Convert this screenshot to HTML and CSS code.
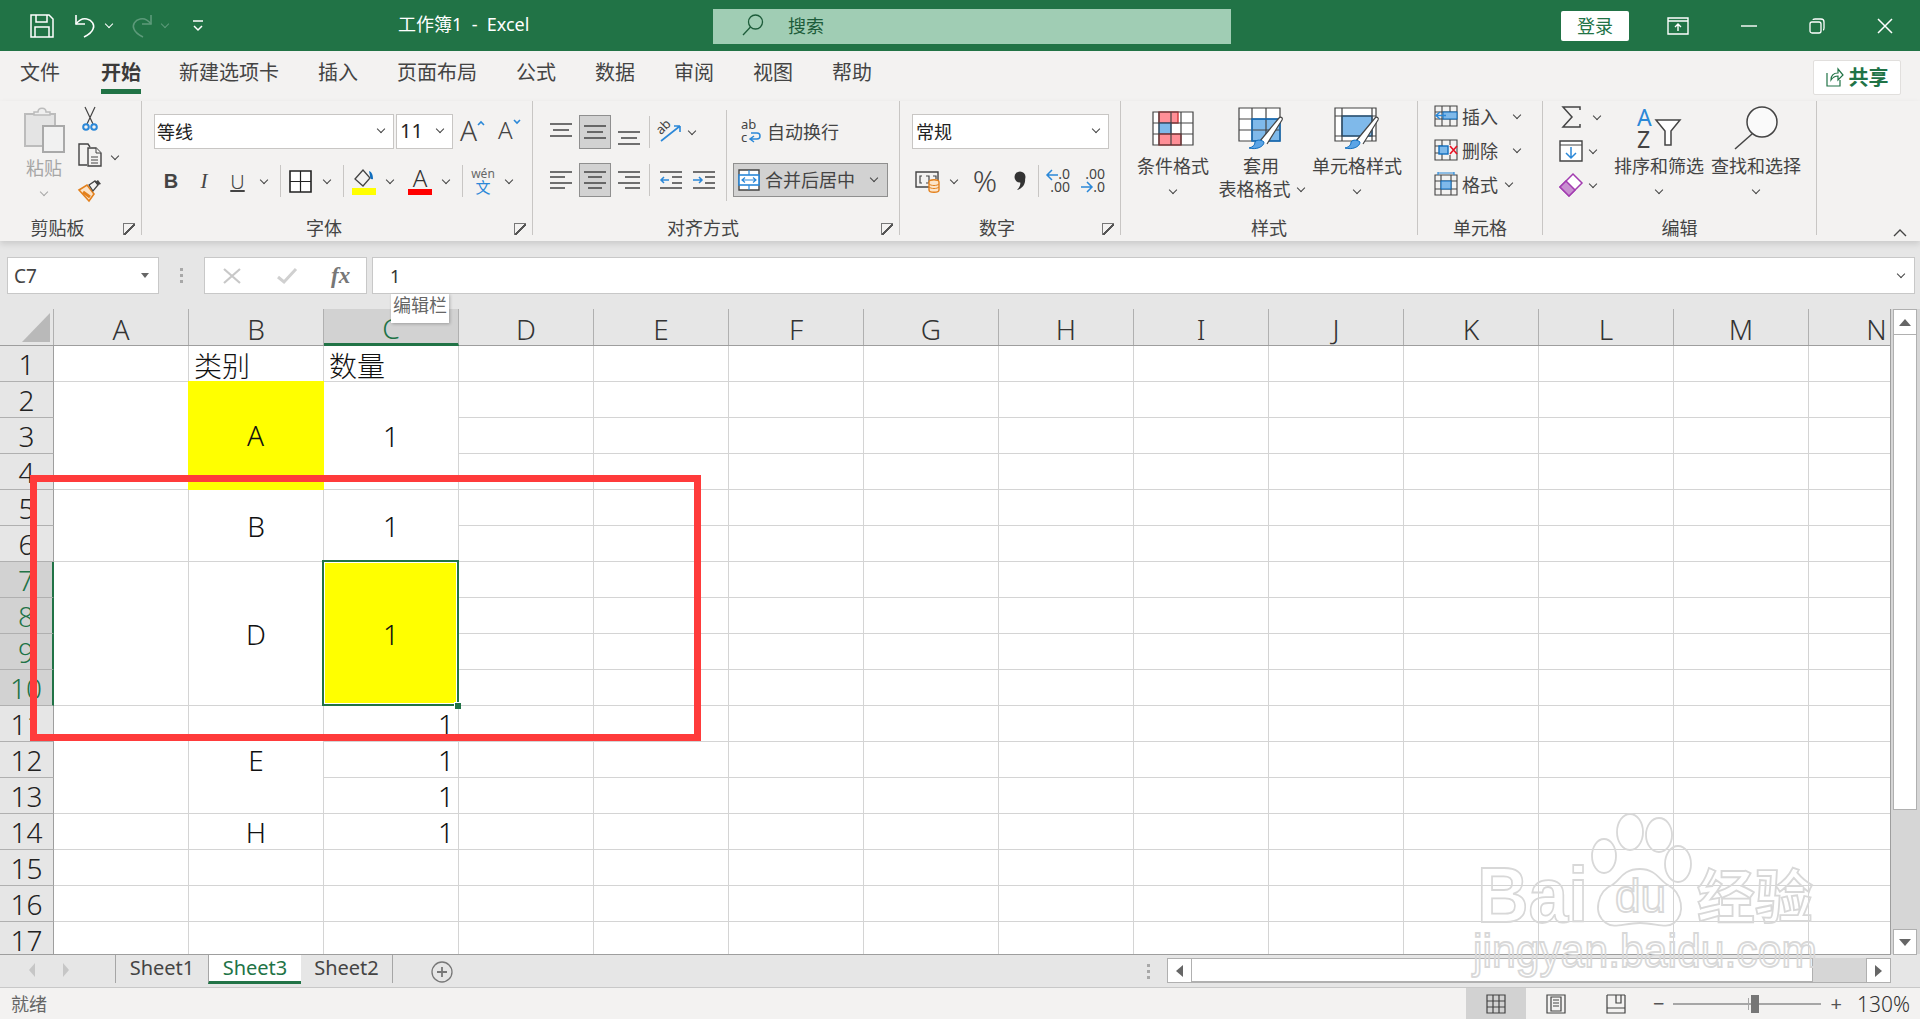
FILE: index.html
```html
<!DOCTYPE html>
<html>
  <head>
    <meta charset="utf-8">
    <meta name="viewport" content="width=device-width">
    <title>工作簿1 - Excel</title>
    <link rel="stylesheet" href="styles.css">
  </head>
  <body>
    <!-- title bar -->
    <header class="titlebar">
      <div class="qat">
        <svg class="qat-save" width="24" height="24" viewBox="0 0 24 24" fill="none" stroke="#fff" stroke-width="1.5"><path d="M1 1h18l4 4v18H1z"/><path d="M6 1v7h11V1M5 23V13h14v10"/></svg>
        <svg class="qat-undo" width="22" height="24" viewBox="0 0 22 24" fill="none" stroke="#fff" stroke-width="1.6"><path d="M2 1v9h9"/><path d="M2 10c3-4 7-6 11-5 5 1 8 6 6 10-1 3-5 6-9 8"/></svg>
        <span class="chev chev-white"></span>
        <svg class="qat-redo" width="22" height="24" viewBox="0 0 22 24" fill="none" stroke="#5d9a7a" stroke-width="1.6"><path d="M20 1v9h-9"/><path d="M20 10c-3-4-7-6-11-5-5 1-8 6-6 10 1 3 5 6 9 8"/></svg>
        <span class="chev chev-dim"></span>
        <svg class="qat-more" width="10" height="12" viewBox="0 0 10 12" fill="none" stroke="#fff" stroke-width="1.5"><path d="M0 1h10M1 6l4 4 4-4"/></svg>
      </div>
      <div class="doc-title">工作簿1&nbsp; - &nbsp;Excel</div>
      <div class="search">
        <svg width="22" height="22" viewBox="0 0 22 22" fill="none" stroke="#1d5c3a" stroke-width="1.3"><circle cx="13.5" cy="8" r="7"/><path d="M8.5 13L1 21"/></svg>
        <span>搜索</span>
      </div>
      <div class="login">登录</div>
      <div class="winbtns">
        <svg width="22" height="18" viewBox="0 0 22 18" fill="none" stroke="#fff" stroke-width="1.4"><path d="M1 1h20v16H1zM1 4h20M11 14V7M8 10l3-3 3 3"/></svg>
        <svg width="16" height="16" viewBox="0 0 16 16" stroke="#fff" stroke-width="1.4"><path d="M0 8h16"/></svg>
        <svg width="16" height="16" viewBox="0 0 16 16" fill="none" stroke="#fff" stroke-width="1.3"><rect x="1" y="4" width="11" height="11" rx="2"/><path d="M4 2c0-1 1-1 2-1h6c2 0 3 1 3 3v6c0 1 0 2-1 2"/></svg>
        <svg width="16" height="16" viewBox="0 0 16 16" stroke="#fff" stroke-width="1.5"><path d="M1 1l14 14M15 1L1 15"/></svg>
      </div>
    </header>

    <!-- tabs -->
    <nav class="tabs">
      <span>文件</span>
      <span class="tab-active">开始</span>
      <span>新建选项卡</span>
      <span>插入</span>
      <span>页面布局</span>
      <span>公式</span>
      <span>数据</span>
      <span>审阅</span>
      <span>视图</span>
      <span>帮助</span>
      <div class="share">
        <svg width="18" height="20" viewBox="0 0 18 20" fill="none" stroke="#217346" stroke-width="1.2"><path d="M1 6v13h13v-6"/><path d="M5 13c0-5 3-7 7-7V2l5 6-5 5V9c-3 0-5 1-7 4z"/></svg>
        <b>共享</b>
      </div>
    </nav>

    <!-- ribbon -->
    <section class="ribbon">
      <div class="group group-clip">
        <div class="clip-body">
          <div class="paste">
            <svg width="42" height="46" viewBox="0 0 42 46"><path d="M2 7h30v32H2z" fill="#e4e4e4" stroke="#bcbcbc" stroke-width="2"/><path d="M11 8V5h4c0-5 8-5 8 0h4v3z" fill="#efefef" stroke="#bcbcbc" stroke-width="1.5"/><rect x="20" y="19" width="21" height="26" fill="#f1f1f1" stroke="#a9a9a9" stroke-width="2"/></svg>
            <span>粘贴</span>
            <span class="chev chev-gray"></span>
          </div>
          <div class="clip-tools">
            <div class="clip-row"><svg width="16" height="24" viewBox="0 0 16 24" fill="none"><path d="M3 0l8 17M13 0L5 17" stroke="#444" stroke-width="1.2"/><circle cx="4" cy="20" r="2.8" stroke="#2b88d8" stroke-width="2"/><circle cx="12" cy="20" r="2.8" stroke="#2b88d8" stroke-width="2"/></svg></div>
            <div class="clip-row">
              <svg width="24" height="24" viewBox="0 0 24 24" fill="#f3f2f1" stroke="#444" stroke-width="1.4"><path d="M9 22H1V1h9l2 3"/><path d="M10 5h8l5 5v13H10z"/><path d="M18 5v5h5M13 14h7M13 17h7M13 20h7" stroke-width="1"/></svg>
              <span class="chev"></span>
            </div>
            <div class="clip-row"><svg width="24" height="22" viewBox="0 0 24 22"><path d="M1 11l8-5 7 9-5 7z" fill="#fbe3c8" stroke="#e3801c" stroke-width="1.6"/><path d="M5 13l7 5" stroke="#e3801c" stroke-width="3"/><path d="M11 6l6-4 3 4-5 6z" fill="#f3f2f1" stroke="#444" stroke-width="1.3"/><path d="M17 3l3-2 3 4-3 1" fill="#444"/></svg></div>
          </div>
        </div>
        <div class="group-foot"><span class="group-label">剪贴板</span><span class="launcher"></span></div>
      </div>

      <div class="group group-font">
        <div class="font-row1">
          <div class="select select-font"><span>等线</span><i class="chev"></i></div>
          <div class="select select-size"><span>11</span><i class="chev"></i></div>
          <div class="grow-a"><span>A</span><svg width="8" height="5" viewBox="0 0 8 5" fill="none" stroke="#2b88d8" stroke-width="1.6"><path d="M1 5l3-3 3 3"/></svg></div>
          <div class="shrink-a"><span>A</span><svg width="8" height="5" viewBox="0 0 8 5" fill="none" stroke="#2b88d8" stroke-width="1.6"><path d="M1 0l3 3 3-3"/></svg></div>
        </div>
        <div class="font-row2">
          <b class="fmt-b">B</b>
          <i class="fmt-i">I</i>
          <u class="fmt-u">U</u>
          <span class="chev"></span>
          <span class="vsep"></span>
          <svg width="23" height="23" viewBox="0 0 23 23" fill="#fff" stroke="#222" stroke-width="1.6"><path d="M1 1h21v21H1z"/><path d="M11.5 1v21M1 11.5h21" stroke-width="1.2"/></svg>
          <span class="chev"></span>
          <span class="vsep"></span>
          <svg width="24" height="27" viewBox="0 0 24 27"><path d="M3 11L11 2l7 8-7 8z" fill="#f3f2f1" stroke="#444" stroke-width="1.3"/><path d="M17 3c3 1 4 4 4 8-2 1-3-1-3-3z" fill="#106ebe"/><rect y="20" width="24" height="7" fill="#ff0"/></svg>
          <span class="chev"></span>
          <div class="color-a"><span>A</span></div>
          <span class="chev"></span>
          <span class="vsep"></span>
          <div class="wen"><small>wén</small><span>文</span></div>
          <span class="chev"></span>
        </div>
        <div class="group-foot"><span class="group-label">字体</span><span class="launcher"></span></div>
      </div>

      <div class="group group-align">
        <div class="align-body">
          <div class="align-left">
            <div class="align-row align-row-top">
              <svg width="22" height="18" viewBox="0 0 22 18" stroke="#444" stroke-width="1.6"><path d="M0 1h22M3 7h16M0 13h22"/></svg>
              <div class="on"><svg width="22" height="18" viewBox="0 0 22 18" stroke="#444" stroke-width="1.6"><path d="M0 3h22M3 9h16M0 15h22"/></svg></div>
              <svg class="lower" width="22" height="18" viewBox="0 0 22 18" stroke="#444" stroke-width="1.6"><path d="M0 5h22M3 11h16M0 17h22"/></svg>
              <span class="vsep"></span>
              <svg width="26" height="26" viewBox="0 0 26 26" fill="none"><path d="M4 22L23 7M23 7h-6M23 7v6" stroke="#2b88d8" stroke-width="1.6"/><text x="0" y="13" font-size="13" fill="#444" transform="rotate(-45 6 10)">ab</text></svg>
              <span class="chev"></span>
            </div>
            <div class="align-row">
              <svg width="22" height="20" viewBox="0 0 22 20" stroke="#444" stroke-width="1.6"><path d="M0 2h22M0 7h15M0 13h22M0 18h15"/></svg>
              <div class="on"><svg width="22" height="20" viewBox="0 0 22 20" stroke="#444" stroke-width="1.6"><path d="M0 2h22M4 7h14M0 13h22M4 18h14"/></svg></div>
              <svg width="22" height="20" viewBox="0 0 22 20" stroke="#444" stroke-width="1.6"><path d="M0 2h22M7 7h15M0 13h22M7 18h15"/></svg>
              <span class="vsep"></span>
              <svg width="22" height="20" viewBox="0 0 22 20" fill="none"><path d="M0 2h22M12 7h10M12 13h10M0 18h22" stroke="#444" stroke-width="1.5"/><path d="M9 10H1M4 7l-3 3 3 3" stroke="#2b88d8" stroke-width="1.5"/></svg>
              <svg width="22" height="20" viewBox="0 0 22 20" fill="none"><path d="M0 2h22M12 7h10M12 13h10M0 18h22" stroke="#444" stroke-width="1.5"/><path d="M0 10h9M6 7l3 3-3 3" stroke="#2b88d8" stroke-width="1.5"/></svg>
              <span></span>
            </div>
          </div>
          <div class="align-right">
            <div class="wrap-text">
              <svg width="21" height="24" viewBox="0 0 21 24" fill="none"><text x="0" y="10" font-size="13" fill="#444">ab</text><text x="0" y="23" font-size="13" fill="#444">c</text><path d="M10 20h6c4 0 4-6 0-6h-6M13 17l-4 3 4 3" stroke="#2b88d8" stroke-width="1.5"/></svg>
              <span>自动换行</span>
            </div>
            <div class="merge">
              <svg width="22" height="22" viewBox="0 0 22 22" fill="#fff"><path d="M1 1h20v20H1z" stroke="#444" stroke-width="1.4"/><rect x="1" y="6" width="20" height="10" stroke="#2b88d8" stroke-width="1.6"/><path d="M4 11h14M7 8.500l-3 2.500 3 2.500M15 8.500l3 2.500-3 2.500M11 1v5M11 16v5" stroke="#2b88d8" stroke-width="1.2" fill="none"/></svg>
              <span>合并后居中</span>
              <i class="chev"></i>
            </div>
          </div>
        </div>
        <div class="group-foot"><span class="group-label">对齐方式</span><span class="launcher"></span></div>
      </div>

      <div class="group group-num">
        <div class="select select-num"><span>常规</span><i class="chev"></i></div>
        <div class="num-row">
          <svg width="26" height="24" viewBox="0 0 26 24" fill="none"><path d="M1 3h22v15H1z" stroke="#444" stroke-width="1.4"/><path d="M7 7H5v7h2M11 7h3v7h-3M18 7h3v3" stroke="#444" stroke-width="1.2"/><path d="M14 13c0-3 10-3 10 0v8c0 3-10 3-10 0z" fill="#fce4c8" stroke="#e3801c" stroke-width="1.4"/><path d="M14 15c2 2 8 2 10 0M14 18c2 2 8 2 10 0" stroke="#e3801c"/></svg>
          <span class="chev"></span>
          <span class="pct">%</span>
          <svg width="13" height="20" viewBox="0 0 13 20" fill="#333"><circle cx="7" cy="6" r="5.500"/><path d="M12 7c1 6-3 11-8 12 3-3 4-6 3-9z"/></svg>
          <span class="vsep"></span>
          <div class="dec"><svg width="12" height="12" viewBox="0 0 12 12" fill="none" stroke="#2b88d8" stroke-width="1.5"><path d="M12 6H1M6 1L1 6l5 5"/></svg><span>.0</span><span class="dec-low">.00</span></div>
          <div class="dec"><span class="dec-top">.00</span><svg width="12" height="12" viewBox="0 0 12 12" fill="none" stroke="#2b88d8" stroke-width="1.5"><path d="M0 6h11M6 1l5 5-5 5"/></svg><span class="dec-low2">.0</span></div>
        </div>
        <div class="group-foot"><span class="group-label">数字</span><span class="launcher"></span></div>
      </div>

      <div class="group group-styles">
        <div class="big-row">
          <div class="big big-88">
            <div class="big-icon"><svg width="42" height="35" viewBox="0 0 42 35" fill="none"><path d="M1 1h40v33H1z" fill="#fff"/><rect x="7" y="1" width="19" height="11" fill="#ff8f97" stroke="#d13438" stroke-width="1.4"/><rect x="7" y="12" width="12" height="11" fill="#7fb9ea" stroke="#106ebe" stroke-width="1"/><rect x="7" y="23" width="22" height="11" fill="#ff8f97" stroke="#d13438" stroke-width="1.4"/><path d="M1 1h40v33H1zM1 12h40M1 23h40M7 1v33M19 1v33M29 1v33" stroke="#444" stroke-width="1.2"/></svg></div>
            <span>条件格式</span>
            <i class="chev big-chev"></i>
          </div>
          <div class="big big-88">
            <div class="big-icon"><svg width="46" height="42" viewBox="0 0 46 42" fill="none"><path d="M1 1h41v33H1z" fill="#fff"/><rect x="14" y="12" width="28" height="22" fill="#7fb9ea"/><path d="M1 1h41v33H1zM1 12h41M1 23h41M14 1v33M28 1v33" stroke="#444" stroke-width="1.2"/><path d="M14 12h28v22H14z" stroke="#106ebe" stroke-width="1.4"/><path d="M22 34L41 11c2-2 4 0 3 2L29 37" fill="#fff" stroke="#444" stroke-width="1.2"/><path d="M11 41c4-1 6-3 6-6 2-3 7-2 9 0 0 5-8 8-15 6z" fill="#5ba4e6" stroke="#106ebe"/></svg></div>
            <span>套用</span>
            <span class="big-line2">表格格式<i class="chev"></i></span>
          </div>
          <div class="big big-104">
            <div class="big-icon"><svg width="46" height="42" viewBox="0 0 46 42" fill="none"><path d="M1 1h41v33H1z" fill="#fff"/><rect x="8" y="9" width="30" height="20" fill="#7fb9ea" stroke="#106ebe" stroke-width="1.4"/><path d="M1 1h41v33H1zM1 9h41M1 29h41M8 1v33M38 1v33" stroke="#444" stroke-width="1.2"/><path d="M22 34L41 11c2-2 4 0 3 2L29 37" fill="#fff" stroke="#444" stroke-width="1.2"/><path d="M11 41c4-1 6-3 6-6 2-3 7-2 9 0 0 5-8 8-15 6z" fill="#5ba4e6" stroke="#106ebe"/></svg></div>
            <span>单元格样式</span>
            <i class="chev big-chev"></i>
          </div>
        </div>
        <div class="group-foot"><span class="group-label">样式</span></div>
      </div>

      <div class="group group-cells">
        <div class="cells-list">
          <div class="cells-row">
            <svg width="24" height="22" viewBox="0 0 24 22" fill="none"><path d="M1 1h22v20H1zM1 7h22M1 14h22M8 1v20M16 1v20" stroke="#444" stroke-width="1.1"/><rect x="9" y="7" width="14" height="7" fill="#7fb9ea" stroke="#106ebe"/><path d="M12 10.500H2M6 7l-4 3.500L6 14" stroke="#2b88d8" stroke-width="1.5"/></svg>
            <span>插入</span><i class="chev"></i>
          </div>
          <div class="cells-row">
            <svg width="24" height="22" viewBox="0 0 24 22" fill="none"><path d="M1 1h22v20H1zM1 7h8M1 14h8M16 1v5M16 16v5M8 1v6M8 15v6" stroke="#444" stroke-width="1.1"/><rect x="5" y="7" width="9" height="8" fill="#7fb9ea" stroke="#106ebe" stroke-width="1.4"/><path d="M16 7l7 8M23 7l-7 8" stroke="#e81123" stroke-width="1.6"/></svg>
            <span>删除</span><i class="chev"></i>
          </div>
          <div class="cells-row">
            <svg width="24" height="24" viewBox="0 0 24 24" fill="none"><path d="M1 3h22v20H1zM1 9h22M1 17h22M7 3v20M17 3v20" stroke="#444" stroke-width="1.1"/><rect x="7" y="9" width="10" height="8" fill="#7fb9ea" stroke="#106ebe"/><path d="M4 1h16M4 0v3M20 0v3" stroke="#2b88d8" stroke-width="1.2"/></svg>
            <span>格式</span><i class="chev chev-near"></i>
          </div>
        </div>
        <div class="group-foot"><span class="group-label">单元格</span></div>
      </div>

      <div class="group group-edit">
        <div class="edit-body">
          <div class="edit-list">
            <div class="edit-row"><svg class="sum" width="18" height="22" viewBox="0 0 18 22" fill="none" stroke="#444" stroke-width="1.5"><path d="M18 4V1H1l9 10-9 10h17v-3"/></svg><i class="chev"></i></div>
            <div class="edit-row"><svg width="24" height="22" viewBox="0 0 24 22" fill="#fff"><path d="M1 1h22v20H1z" stroke="#444" stroke-width="1.4"/><path d="M1 5h22" stroke="#444"/><path d="M12 7v11M7 13l5 5 5-5" fill="none" stroke="#2b88d8" stroke-width="1.5"/></svg><i class="chev"></i></div>
            <div class="edit-row"><svg width="24" height="24" viewBox="0 0 24 24"><path d="M1 14L14 1l9 9-13 13z" fill="#fff" stroke="#a23cb0" stroke-width="1.5"/><path d="M1 14l6-6 9 9-6 6z" fill="#c88fd0" stroke="#a23cb0" stroke-width="1.5"/></svg><i class="chev"></i></div>
          </div>
          <div class="big big-90">
            <div class="big-icon"><svg width="44" height="42" viewBox="0 0 44 42" fill="none"><text x="0" y="19" font-size="23" fill="#2b88d8">A</text><text x="0" y="41" font-size="23" fill="#444">Z</text><path d="M19 13h24l-9 11v14h-6V24z" stroke="#444" stroke-width="1.5" fill="#fff"/></svg></div>
            <span>排序和筛选</span>
            <i class="chev big-chev"></i>
          </div>
          <div class="big big-90">
            <div class="big-icon"><svg width="44" height="44" viewBox="0 0 44 44" fill="none" stroke="#444" stroke-width="1.5"><circle cx="28" cy="16" r="15" fill="#fafafa"/><path d="M18 28L1 43"/></svg></div>
            <span>查找和选择</span>
            <i class="chev big-chev"></i>
          </div>
        </div>
        <div class="group-foot"><span class="group-label">编辑</span></div>
      </div>

      <div class="ribbon-end">
        <svg width="14" height="8" viewBox="0 0 14 8" fill="none" stroke="#444" stroke-width="1.4"><path d="M1 8l6-6 6 6"/></svg>
      </div>
    </section>

    <!-- formula bar -->
    <section class="formula">
      <div class="namebox"><span>C7</span><i class="caret"></i></div>
      <div class="fdots"><i></i><i></i><i></i></div>
      <div class="fbtns">
        <svg width="18" height="16" viewBox="0 0 18 16" stroke="#c8c8c8" stroke-width="2.200"><path d="M1 1l16 14M17 1L1 15"/></svg>
        <svg width="20" height="16" viewBox="0 0 20 16" fill="none" stroke="#d0d0d0" stroke-width="3"><path d="M1 9l6 5L19 1"/></svg>
        <span class="fx">fx</span>
      </div>
      <div class="finput"><span>1</span><i class="chev"></i></div>
    </section>

    <!-- sheet -->
    <section class="sheet-wrap">
      <div class="sheet">
        <div class="col-heads">
          <div class="corner"><svg width="28" height="29" viewBox="0 0 28 29"><path d="M28 0v29H0z" fill="#b9b9b9"/></svg></div>
          <div class="col-head">A</div>
          <div class="col-head">B</div>
          <div class="col-head col-on">C</div>
          <div class="col-head">D</div>
          <div class="col-head">E</div>
          <div class="col-head">F</div>
          <div class="col-head">G</div>
          <div class="col-head">H</div>
          <div class="col-head">I</div>
          <div class="col-head">J</div>
          <div class="col-head">K</div>
          <div class="col-head">L</div>
          <div class="col-head">M</div>
          <div class="col-head col-last">N</div>
        </div>
        <div class="sheet-body">
          <div class="row-heads">
            <div class="row-head">1</div>
            <div class="row-head">2</div>
            <div class="row-head">3</div>
            <div class="row-head">4</div>
            <div class="row-head">5</div>
            <div class="row-head">6</div>
            <div class="row-head row-on">7</div>
            <div class="row-head row-on">8</div>
            <div class="row-head row-on">9</div>
            <div class="row-head row-on">10</div>
            <div class="row-head">11</div>
            <div class="row-head">12</div>
            <div class="row-head">13</div>
            <div class="row-head">14</div>
            <div class="row-head">15</div>
            <div class="row-head">16</div>
            <div class="row-head">17</div>
          </div>
          <div class="cells">
            <div class="cell txt b1">类别</div>
            <div class="cell txt c1">数量</div>
            <div class="cell merged a2"></div>
            <div class="cell merged yellow b2">A</div>
            <div class="cell merged c2">1</div>
            <div class="cell merged a5"></div>
            <div class="cell merged b5">B</div>
            <div class="cell merged c5">1</div>
            <div class="cell merged a7"></div>
            <div class="cell merged b7">D</div>
            <div class="cell merged yellow selected c7">1<span class="fill-handle"></span></div>
            <div class="cell merged a11"></div>
            <div class="cell merged b11">E</div>
            <div class="cell num c11">1</div>
            <div class="cell num c12">1</div>
            <div class="cell num c13">1</div>
            <div class="cell merged b14">H</div>
            <div class="cell num c14">1</div>
          </div>
        </div>
      </div>
      <div class="vscroll">
        <div class="sbtn"><svg width="12" height="7" viewBox="0 0 12 7"><path d="M0 7l6-7 6 7z" fill="#666"/></svg></div>
        <div class="vthumb"></div>
        <div class="sbtn"><svg width="12" height="7" viewBox="0 0 12 7"><path d="M0 0l6 7 6-7z" fill="#666"/></svg></div>
      </div>
    </section>

    <!-- sheet tabs -->
    <section class="tabbar">
      <div class="tab-nav">
        <svg width="6" height="14" viewBox="0 0 6 14"><path d="M6 0L0 7l6 7z" fill="#c6c6c6"/></svg>
        <svg width="6" height="14" viewBox="0 0 6 14"><path d="M0 0l6 7-6 7z" fill="#c6c6c6"/></svg>
      </div>
      <div class="sheet-tab">Sheet1</div>
      <div class="sheet-tab sheet-tab-on">Sheet3</div>
      <div class="sheet-tab sheet-tab-last">Sheet2</div>
      <div class="add-sheet">
        <svg width="22" height="22" viewBox="0 0 22 22" fill="none" stroke="#777" stroke-width="1.300"><circle cx="11" cy="11" r="10"/><path d="M11 6v10M6 11h10" stroke-width="1.800"/></svg>
      </div>
      <div class="fdots tab-dots"><i></i><i></i><i></i></div>
      <div class="hscroll">
        <div class="sbtn hbtn"><svg width="7" height="12" viewBox="0 0 7 12"><path d="M7 0L0 6l7 6z" fill="#666"/></svg></div>
        <div class="hthumb"></div>
        <div class="htrack"></div>
        <div class="sbtn hbtn"><svg width="7" height="12" viewBox="0 0 7 12"><path d="M0 0l7 6-7 6z" fill="#666"/></svg></div>
      </div>
    </section>

    <!-- status bar -->
    <footer class="status">
      <span class="status-text">就绪</span>
      <div class="views">
        <div class="view view-on"><svg width="20" height="20" viewBox="0 0 20 20" fill="none" stroke="#444" stroke-width="1.200"><path d="M1 1h18v18H1zM1 7h18M1 13h18M7 1v18M13 1v18"/></svg></div>
        <div class="view"><svg width="20" height="20" viewBox="0 0 20 20" fill="none" stroke="#444" stroke-width="1.200"><path d="M1 1h18v18H1zM5 3h10v14H5zM7 6h6M7 9h6M7 12h6"/></svg></div>
        <div class="view"><svg width="20" height="20" viewBox="0 0 20 20" fill="none" stroke="#444" stroke-width="1.200"><path d="M1 1v18h18V1M1 1h18M10 1v8h5V1M1 14h18"/></svg></div>
      </div>
      <div class="zoom">
        <span class="zoom-sign">−</span>
        <div class="slider"><i class="slider-tick"></i><i class="slider-thumb"></i></div>
        <span class="zoom-sign">+</span>
      </div>
      <span class="zoom-pct">130%</span>
    </footer>

    <!-- things lying over the window -->
    <div class="tooltip">编辑栏</div>
    <div class="redbox"></div>
    <svg class="watermark" width="360" height="180" viewBox="0 0 360 180" fill="none" stroke="#d8d8d8" stroke-width="1.800">
      <text x="7" y="112" font-family="Liberation Sans" font-weight="700" font-size="78" textLength="111" lengthAdjust="spacingAndGlyphs">Bai</text>
      <ellipse cx="160" cy="22" rx="13" ry="18"/>
      <ellipse cx="189" cy="25" rx="13" ry="17"/>
      <ellipse cx="134" cy="46" rx="12" ry="17"/>
      <ellipse cx="208" cy="54" rx="13" ry="18"/>
      <path d="M136 113c-14-10-8-32 6-38 8-4 10-16 28-16 16 0 20 12 28 16 14 8 18 28 6 38-8 6-18 0-34 0s-26 6-34 0z"/>
      <text x="145" y="102" font-family="Liberation Sans" font-size="46">du</text>
      <text x="227" y="108" font-family="Noto Sans CJK SC" font-weight="700" font-size="58">经验</text>
      <text x="3" y="157" font-family="Liberation Sans" font-size="46" textLength="344" lengthAdjust="spacingAndGlyphs">jingyan.baidu.com</text>
    </svg>
  </body>
</html>
```

FILE: styles.css
```css
* {
  margin: 0;
  box-sizing: border-box;
}
html, body {
  height: 100%;
}
body {
  position: relative;
  display: flex;
  flex-direction: column;
  overflow: hidden;
  color: #444;
  background: #e6e6e6;
  font-family: "Noto Sans", "Noto Sans CJK SC", sans-serif;
  font-size: 18px;
}
i {
  font-style: normal;
}
svg {
  flex-shrink: 0;
  display: block;
  overflow: visible;
}

.chev {
  display: block;
  width: 6px;
  height: 6px;
  margin-top: -3px;
  border-right: 1.5px solid #444;
  border-bottom: 1.5px solid #444;
  transform: rotate(45deg);
}
.chev-white { border-color: #fff; }
.chev-dim { border-color: #5d9a7a; }
.chev-gray { border-color: #a6a6a6; }

/* title bar */
.titlebar {
  height: 51px;
  flex-shrink: 0;
  display: flex;
  align-items: center;
  padding-left: 30px;
  background: #217346;
  color: #fff;
}
.qat {
  width: 368px;
  display: flex;
  align-items: center;
}
.qat-undo { margin-left: 20px; }
.qat .chev-white { margin-left: 10px; }
.qat-redo { margin-left: 19px; }
.qat .chev-dim { margin-left: 9px; }
.qat-more { margin-left: 25px; }
.doc-title {
  width: 315px;
  font-size: 18px;
  margin-top: -6px;
}
.search {
  width: 518px;
  height: 35px;
  margin-top: 1px;
  padding-bottom: 2px;
  display: flex;
  align-items: center;
  gap: 24px;
  padding-left: 29px;
  background: #a0cdb4;
  color: #1d5c3a;
}
.login {
  width: 68px;
  height: 30px;
  margin-left: 330px;
  border-radius: 2px;
  background: #fff;
  color: #217346;
  text-align: center;
  line-height: 30px;
}
.winbtns {
  flex: 1;
  display: flex;
  align-items: center;
  padding-left: 38px;
  gap: 52px;
}

/* tabs */
.tabs {
  height: 50px;
  flex-shrink: 0;
  display: flex;
  align-items: center;
  gap: 39px;
  padding: 0 19px 0 20px;
  background: #f3f2f1;
  font-size: 20px;
}
.tabs > span {
  line-height: 38px;
  margin-top: -7px;
}
.tabs > .tab-active {
  font-weight: 700;
  color: #3b3a39;
  line-height: 33px;
  border-bottom: 5px solid #217346;
  margin: -3px -1px 0 2px;
}
.share {
  width: 88px;
  height: 35px;
  margin-left: auto;
  margin-top: 3px;
  padding-bottom: 2px;
  display: flex;
  align-items: center;
  justify-content: center;
  gap: 5px;
  background: #fff;
  border: 1px solid #e1dfdd;
  border-radius: 2px;
  color: #217346;
}

/* ribbon */
.ribbon {
  height: 140px;
  flex-shrink: 0;
  display: flex;
  background: #f3f2f1;
  box-shadow: 0 3px 6px rgba(0, 0, 0, 0.12);
  position: relative;
}
.group {
  height: 134px;
  display: flex;
  flex-direction: column;
  border-right: 1px solid #c8c6c4;
}
.group-foot {
  margin-top: auto;
  margin-bottom: -3px;
  display: flex;
  align-items: center;
  height: 20px;
}
.group-label {
  flex: 1;
  text-align: center;
  line-height: 18px;
}
.launcher {
  width: 12px;
  height: 12px;
  margin: 2px 6px 0 8px;
  border-left: 1px solid #777;
  border-top: 1px solid #777;
  background: linear-gradient(135deg, transparent 44%, #555 44%, #555 56%, transparent 56%);
}
.vsep {
  display: block;
  width: 1px;
  height: 32px;
  background: #c8c6c4;
}

.group-clip { width: 142px; }
.group-font { width: 391px; }
.group-align { width: 367px; }
.group-num { width: 221px; }
.group-styles { width: 297px; }
.group-cells { width: 125px; }
.group-edit { width: 274px; }

/* clipboard */
.clip-body {
  display: flex;
  padding: 6px 0 0 21px;
}
.paste {
  width: 46px;
  display: flex;
  flex-direction: column;
  align-items: center;
  color: #a6a6a6;
}
.paste span {
  margin-top: 4px;
  line-height: 22px;
}
.paste .chev {
  margin-top: 10px;
}
.clip-tools {
  margin-left: 11px;
}
.clip-row {
  height: 36px;
  display: flex;
  gap: 10px;
  padding-left: 4px;
}
.clip-row + .clip-row { padding-left: 0; }
.clip-row .chev { margin-top: 10px; }

/* inputs */
.select {
  height: 35px;
  display: flex;
  align-items: center;
  justify-content: space-between;
  background: #fff;
  border: 1px solid #c8c6c4;
  color: #222;
  padding: 0 9px 2px 2px;
}
.select-font { width: 240px; }
.select-size { width: 57px; margin-left: 2px; padding-left: 3px; font-size: 20px; }
.select-num { width: 197px; margin: 13px 0 0 12px; padding-left: 3px; }

/* font */
.group-font {
  padding-top: 13px;
}
.font-row1 {
  display: flex;
  padding-left: 12px;
}
.grow-a, .shrink-a {
  display: flex;
  line-height: 32px;
  font-weight: 300;
}
.grow-a {
  margin-left: 7px;
  font-size: 28px;
}
.shrink-a {
  margin-left: 13px;
  font-size: 24px;
}
.grow-a svg, .shrink-a svg {
  margin-top: 6px;
}
.font-row2 {
  margin-top: 16px;
  height: 30px;
  margin-left: 12px;
  display: grid;
  grid-template-columns: 34px 32px 35px 18px 14px 26px 28px 4px 38px 14px 46px 6px 26px 16px 36px;
  justify-items: center;
  align-items: center;
}
.fmt-b {
  font-family: "Liberation Sans", sans-serif;
  font-size: 20px;
  color: #444;
}
.fmt-i {
  font-family: "Liberation Serif", serif;
  font-style: italic;
  font-size: 21px;
}
.fmt-u {
  font-size: 20px;
  font-weight: 300;
}
.color-a {
  width: 24px;
  height: 27px;
  text-align: center;
  line-height: 20px;
  font-size: 24px;
  font-weight: 300;
  border-bottom: 6px solid #f00;
  color: #333;
}
.wen {
  display: flex;
  flex-direction: column;
  align-items: center;
  color: #2b88d8;
  font-size: 15px;
  line-height: 15px;
}
.wen small {
  font-size: 12px;
  line-height: 13px;
  color: #666;
}

/* alignment */
.align-body {
  display: flex;
  padding-top: 9px;
}
.align-left {
  width: 194px;
  height: 91px;
  padding: 5px 0 0 10px;
  border-right: 1px solid #c8c6c4;
}
.align-row {
  display: grid;
  grid-template-columns: 36px 32px 36px 4px 39px 28px;
  justify-items: center;
  align-items: center;
  height: 34px;
  margin-bottom: 14px;
}
.align-row-top {
  grid-template-columns: 36px 32px 36px 4px 38px 6px;
}
.on {
  width: 32px;
  height: 34px;
  display: flex;
  align-items: center;
  justify-content: center;
  background: #d2d2d2;
  border: 1px solid #8f8f8f;
}
.lower { margin-top: 7px; }
.align-right {
  padding: 5px 0 0 6px;
}
.wrap-text {
  height: 34px;
  display: flex;
  align-items: center;
  gap: 5px;
  padding: 0 0 2px 8px;
}
.merge {
  width: 155px;
  height: 34px;
  margin-top: 14px;
  display: flex;
  align-items: center;
  gap: 5px;
  padding: 0 0 2px 4px;
  background: #d2d2d2;
  border: 1px solid #8f8f8f;
}
.merge svg {
  margin-top: 2px;
}
.merge .chev {
  margin-left: 11px;
}

/* number */
.num-row {
  margin: 16px 0 0 12px;
  height: 30px;
  display: grid;
  grid-template-columns: 32px 20px 42px 26px 12px 28px 42px;
  justify-items: center;
  align-items: center;
}
.pct {
  font-size: 30px;
  font-weight: 300;
  line-height: 30px;
}
.dec {
  position: relative;
  width: 24px;
  height: 26px;
  font-size: 14px;
  line-height: 13px;
}
.dec span {
  position: absolute;
  right: 0;
  top: -1px;
}
.dec .dec-low { top: 12px; }
.dec .dec-top { top: -1px; }
.dec .dec-low2 { top: 12px; }
.dec svg {
  position: absolute;
  left: 0;
  top: 1px;
}
.dec + .dec svg {
  top: 13px;
}

/* big buttons */
.big-row {
  display: flex;
  padding-left: 8px;
}
.big-row, .edit-body {
  padding-top: 5px;
}
.big {
  display: flex;
  flex-direction: column;
  align-items: center;
  line-height: 23px;
  white-space: nowrap;
}
.big-88 { width: 88px; }
.big-90 { width: 90px; }
.big-104 { width: 104px; }
.big-icon {
  height: 44px;
  margin-bottom: 5px;
  display: flex;
  align-items: center;
}
.big-chev {
  margin-top: 9px;
}
.big-line2 {
  display: flex;
  align-items: center;
  gap: 7px;
}

/* cells */
.cells-list {
  margin-top: -2px;
  padding-left: 16px;
}
.cells-row {
  height: 34px;
  display: flex;
  align-items: center;
  gap: 4px;
}
.cells-row .chev {
  margin-left: 12px;
}
.cells-row .chev-near {
  margin-left: 4px;
}

/* editing */
.edit-body {
  display: flex;
  padding-left: 16px;
}
.edit-list {
  width: 55px;
  margin-top: -6px;
}
.edit-row {
  height: 34px;
  display: flex;
  align-items: center;
  gap: 7px;
}
.edit-row .sum {
  margin: 0 7px 0 3px;
}
.edit-body .big + .big {
  margin-left: 7px;
}

.ribbon-end {
  flex: 1;
  display: flex;
  justify-content: flex-end;
  align-items: flex-end;
  padding: 0 13px 5px 0;
}

/* formula bar */
.formula {
  height: 68px;
  flex-shrink: 0;
  display: flex;
  align-items: flex-start;
  padding: 16px 5px 0 7px;
}
.namebox, .fbtns, .finput {
  height: 37px;
  display: flex;
  align-items: center;
  background: #fff;
  border: 1px solid #c8c8c8;
}
.namebox {
  width: 152px;
  justify-content: space-between;
  padding: 0 9px 0 6px;
  font-size: 19px;
}
.caret {
  width: 0;
  height: 0;
  border-left: 4px solid transparent;
  border-right: 4px solid transparent;
  border-top: 5px solid #666;
}
.fdots {
  width: 45px;
  height: 37px;
  display: flex;
  flex-direction: column;
  align-items: center;
  justify-content: center;
  gap: 3px;
}
.fdots i {
  width: 3px;
  height: 3px;
  background: #a8a8a8;
}
.fbtns {
  width: 163px;
  margin-right: 5px;
  padding-left: 18px;
  gap: 36px;
}
.fx {
  margin-left: -2px;
  font-family: "Liberation Serif", serif;
  font-style: italic;
  font-weight: 700;
  font-size: 23px;
  color: #777;
}
.finput {
  flex: 1;
  justify-content: space-between;
  padding: 0 10px 0 17px;
  color: #333;
}

/* sheet */
.sheet-wrap {
  height: 646px;
  flex-shrink: 0;
  display: flex;
  background: #fff;
}
.sheet {
  width: 1890px;
  overflow: hidden;
  border-bottom: 1px solid #9e9e9e;
  font-size: 28px;
  font-weight: 300;
  color: #111;
}
.col-heads {
  height: 37px;
  display: flex;
  background: #e6e6e6;
  border-bottom: 1px solid #9e9e9e;
  line-height: 40px;
  color: #333;
}
.corner {
  width: 54px;
  padding: 4px 0 0 22px;
  border-right: 1px solid #b0b0b0;
}
.col-head {
  width: 135px;
  flex-shrink: 0;
  text-align: center;
  border-right: 1px solid #b0b0b0;
}
.col-last {
  width: 81px;
  border-right: none;
  padding-left: 54px;
}
.col-on {
  margin-bottom: -1px;
  background: #d2d2d2;
  color: #217346;
  border-bottom: 3px solid #217346;
  line-height: 38px;
}
.sheet-body {
  display: flex;
}
.row-heads {
  width: 54px;
  flex-shrink: 0;
}
.row-head {
  height: 36px;
  text-align: center;
  line-height: 36px;
  background: #e6e6e6;
  border-right: 1px solid #9e9e9e;
  border-bottom: 1px solid #b0b0b0;
  color: #222;
}
.row-on {
  background: #d2d2d2;
  color: #217346;
  border-right: 2px solid #217346;
}
.cells {
  flex: 1;
  display: grid;
  grid-template-columns: repeat(13, 135px);
  grid-auto-rows: 36px;
  background-color: #fff;
  background-image:
    linear-gradient(to right, #d4d4d4 1px, transparent 1px),
    linear-gradient(to bottom, #d4d4d4 1px, transparent 1px);
  background-size: 135px 36px;
  background-position: 134px 35px;
}
.cell {
  display: flex;
  align-items: center;
}
.txt {
  padding-left: 5px;
  padding-top: 1px;
  font-size: 28px;
}
.num {
  justify-content: flex-end;
  padding-right: 5px;
}
.merged {
  justify-content: center;
  background: #fff;
  border-right: 1px solid #d4d4d4;
  border-bottom: 1px solid #d4d4d4;
}
.yellow {
  background: #ff0;
  border-color: #ff0;
  margin-top: -1px;
  margin-left: -1px;
}
.selected {
  position: relative;
  margin: 0;
  border-color: #d4d4d4;
}
.selected::after {
  content: "";
  position: absolute;
  inset: -2px -1px -1px -2px;
  border: 2px solid #217346;
  box-shadow: inset 0 0 0 1px #fff;
}
.fill-handle {
  position: absolute;
  z-index: 1;
  right: -3px;
  bottom: -4px;
  width: 7px;
  height: 7px;
  background: #217346;
  border-left: 1px solid #fff;
  border-top: 1px solid #fff;
}
.b1 { grid-area: 1 / 2; }
.c1 { grid-area: 1 / 3; }
.a2 { grid-area: 2 / 1 / span 3; }
.b2 { grid-area: 2 / 2 / span 3; }
.c2 { grid-area: 2 / 3 / span 3; }
.a5 { grid-area: 5 / 1 / span 2; }
.b5 { grid-area: 5 / 2 / span 2; }
.c5 { grid-area: 5 / 3 / span 2; }
.a7 { grid-area: 7 / 1 / span 4; }
.b7 { grid-area: 7 / 2 / span 4; }
.c7 { grid-area: 7 / 3 / span 4; }
.a11 { grid-area: 11 / 1 / span 3; }
.b11 { grid-area: 11 / 2 / span 3; }
.c11 { grid-area: 11 / 3; }
.c12 { grid-area: 12 / 3; }
.c13 { grid-area: 13 / 3; }
.b14 { grid-area: 14 / 2; }
.c14 { grid-area: 14 / 3; }

/* scrollbars */
.vscroll {
  flex: 1;
  display: flex;
  flex-direction: column;
  padding: 0 3px 0 2px;
  background: #d6d6d6;
  border-left: 1px solid #9e9e9e;
  box-shadow: inset 0 -1px 0 #e6e6e6;
}
.sbtn {
  height: 26px;
  display: flex;
  align-items: center;
  justify-content: center;
  background: #fff;
  border: 1px solid #b0b0b0;
}
.vthumb {
  height: 475px;
  margin-bottom: auto;
  background: #fff;
  border: 1px solid #b0b0b0;
  border-top: none;
}

/* sheet tabs */
.tabbar {
  height: 33px;
  flex-shrink: 0;
  display: flex;
  background: #e6e6e6;
  border-bottom: 1px solid #c8c8c8;
  font-size: 20px;
  color: #444;
}
.tab-nav {
  width: 115px;
  display: flex;
  align-items: center;
  gap: 28px;
  padding-left: 29px;
  margin-top: -2px;
}
.sheet-tab {
  width: 93px;
  height: 28px;
  text-align: center;
  line-height: 26px;
  border-left: 1px solid #a6a6a6;
}
.sheet-tab-on {
  height: 29px;
  background: #fff;
  color: #217346;
  border-left: 1px solid #a6a6a6;
  border-bottom: 3px solid #217346;
}
.sheet-tab-last {
  width: 92px;
  border-left: none;
  border-right: 1px solid #a6a6a6;
}
.add-sheet {
  width: 745px;
  padding: 6px 0 0 38px;
}
.tab-dots {
  width: 20px;
  height: 33px;
  margin-right: 9px;
}
.hscroll {
  width: 724px;
  height: 25px;
  margin-top: 3px;
  display: flex;
  background: #d6d6d6;
  border-bottom: 1px solid #b0b0b0;
}
.hbtn {
  width: 25px;
  height: 25px;
}
.hthumb {
  width: 621px;
  background: #fff;
  border: 1px solid #b0b0b0;
  border-left: none;
}
.htrack {
  flex: 1;
}

/* status bar */
.status {
  flex: 1;
  display: flex;
  align-items: center;
  background: #f3f2f1;
  padding-left: 11px;
  color: #666;
}
.status-text {
  width: 1455px;
  margin-top: -2px;
}
.views {
  width: 180px;
  height: 100%;
  display: flex;
}
.view {
  width: 60px;
  display: flex;
  align-items: center;
  justify-content: center;
}
.view-on {
  background: #d2d2d2;
}
.zoom {
  width: 200px;
  margin-left: 7px;
  display: flex;
  align-items: center;
  gap: 9px;
}
.zoom-sign {
  font-size: 20px;
  color: #555;
}
.slider {
  position: relative;
  width: 148px;
  height: 2px;
  background: #a6a6a6;
}
.slider-tick {
  position: absolute;
  left: 75px;
  top: -5px;
  width: 1px;
  height: 12px;
  background: #a6a6a6;
}
.slider-thumb {
  position: absolute;
  left: 78px;
  top: -8px;
  width: 8px;
  height: 18px;
  background: #767676;
}
.zoom-pct {
  margin-left: 4px;
  font-size: 21px;
  font-weight: 300;
  color: #333;
}

/* overlays */
.tooltip {
  position: absolute;
  left: 391px;
  top: 294px;
  width: 58px;
  height: 29px;
  text-align: center;
  font-size: 18px;
  line-height: 22px;
  color: #666;
  background: #fff;
  box-shadow: 1px 1px 3px rgba(0, 0, 0, 0.25);
}
.redbox {
  position: absolute;
  left: 30px;
  top: 475px;
  width: 671px;
  height: 266px;
  border: 7px solid #ff3b3b;
}
.watermark {
  position: absolute;
  left: 1470px;
  top: 810px;
}
```
